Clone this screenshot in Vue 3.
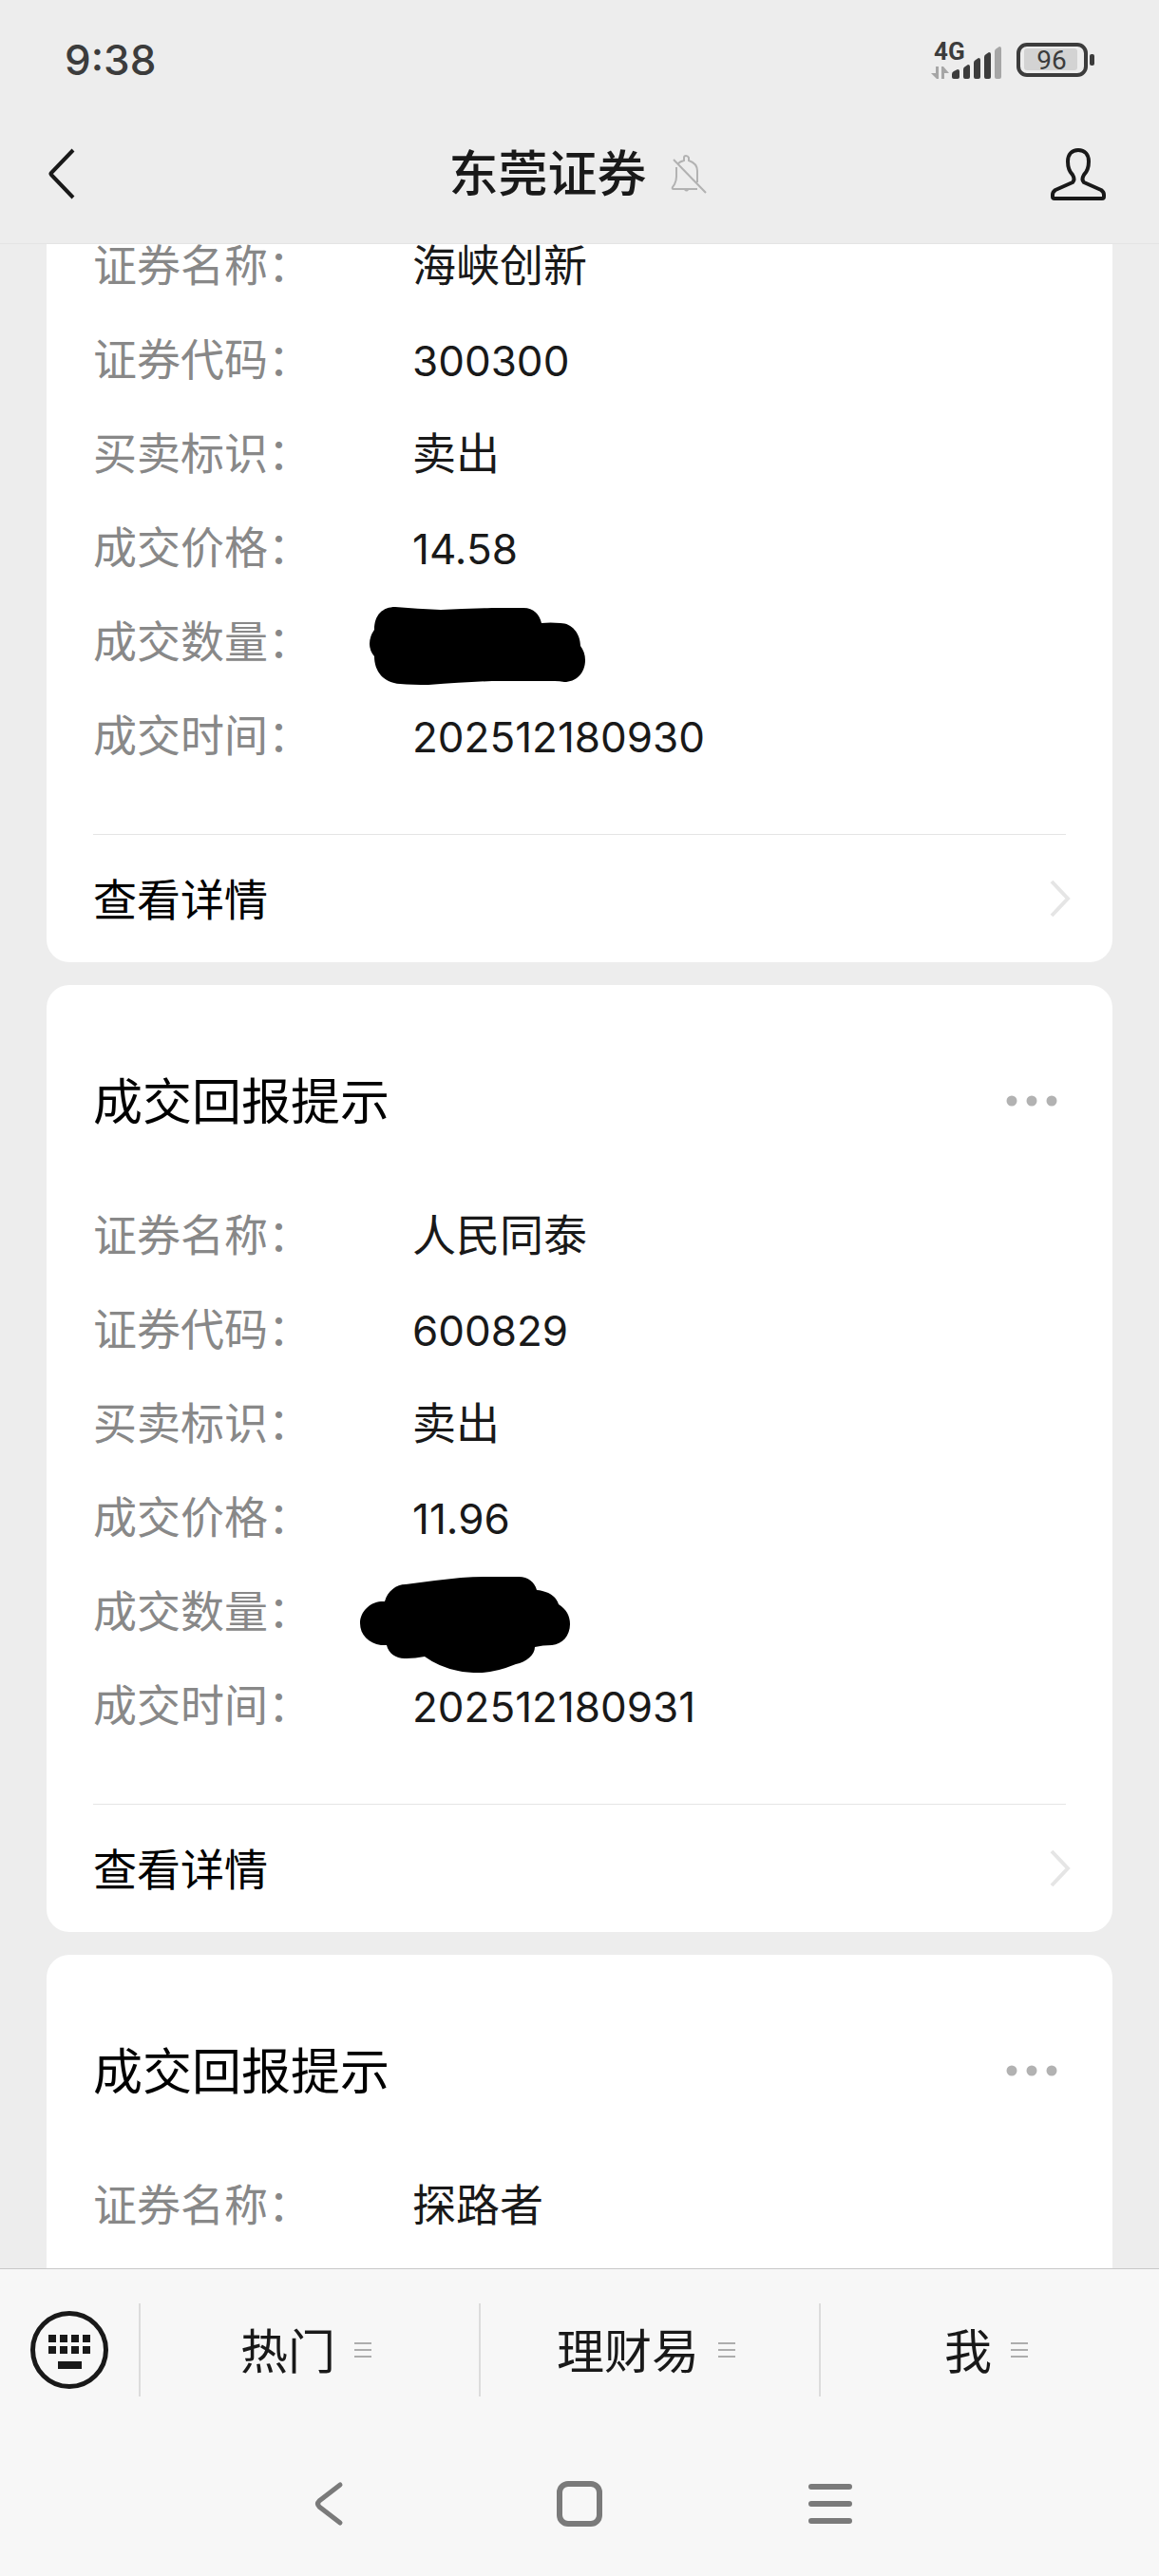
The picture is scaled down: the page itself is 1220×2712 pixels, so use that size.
<script setup>
// Outlines of the hand-drawn marks that hide the traded quantity
const marks = {
  wide: {
    width: 228,
    height: 83,
    shift: -45,
    path: 'M27 0Q50 2 75 3Q100 2 129 1H162C173 1 179 8 181 17Q190 16 201 17C213 17 222 28 222 41C225 45 227 50 227 56C227 70 217 79 205 79Q200 78 195 78H129Q100 79 62 82Q45 82 32 81C15 80 5 68 5 52Q0 46 0 39Q0 31 5 24C5 8 14 0 27 0Z',
  },
  round: {
    width: 222,
    height: 102,
    shift: -55,
    path: 'M22 26H26C29 15 38 8 48 8Q76 4 106 1Q124 0 141 0H167C177 0 184 6 186 14Q189 14 192 15C201 17 207 22 209 29C217 34 221 41 221 50C221 62 213 71 202 72Q192 72 184 74C184 82 175 90 164 92Q142 101 126 101Q112 101 103 99Q83 95 68 84Q58 86 49 86C39 87 30 81 28 72H22C9 70 0 61 0 49C0 37 10 27 22 26Z',
  },
}

const cards = [
  {
    clipped: true,
    rows: [
      { label: '证券名称', value: '海峡创新' },
      { label: '证券代码', value: '300300', numeric: true },
      { label: '买卖标识', value: '卖出' },
      { label: '成交价格', value: '14.58', numeric: true },
      { label: '成交数量', mark: marks.wide },
      { label: '成交时间', value: '202512180930', numeric: true },
    ],
    link: true,
  },
  {
    title: '成交回报提示',
    rows: [
      { label: '证券名称', value: '人民同泰' },
      { label: '证券代码', value: '600829', numeric: true },
      { label: '买卖标识', value: '卖出' },
      { label: '成交价格', value: '11.96', numeric: true },
      { label: '成交数量', mark: marks.round },
      { label: '成交时间', value: '202512180931', numeric: true },
    ],
    link: true,
  },
  {
    title: '成交回报提示',
    rows: [{ label: '证券名称', value: '探路者' }],
  },
]

const menus = ['热门', '理财易', '我']
</script>

<template>
  <div class="screen">
    <div class="status">
      <time class="clock">9:38</time>
      <div class="status-icons">
        <svg width="76" height="42" viewBox="0 0 76 42" aria-hidden="true">
          <text x="3" y="21" class="network">4G</text>
          <path fill="#a6a6a6" d="M5 28h3v13H6L0 35h5zM11 41V28h2l6 7h-5v6z" />
          <g fill="#3c3c3c">
            <path d="M22 36q0-2 2-3l4-2q2 0 2 2v6q0 2-2 2h-4q-2 0-2-2z" />
            <path d="M34 31q0-2 2-3l3-2q2 0 2 2v11q0 2-2 2h-3q-2 0-2-2z" />
            <path d="M45 24q0-2 2-3l3-2q2 0 2 2v18q0 2-2 2h-3q-2 0-2-2z" />
            <path d="M56 18q0-2 2-3l3-2q2 0 2 2v24q0 2-2 2h-3q-2 0-2-2z" />
          </g>
          <path fill="#a6a6a6" d="M67 12q0-2 2-3l3-2q2 0 2 2v30q0 2-2 2h-3q-2 0-2-2z" />
        </svg>
        <svg width="82" height="38" viewBox="0 0 82 38" aria-hidden="true">
          <rect x="8" y="7" width="56" height="23" rx="3" fill="#d3d3d3" />
          <rect x="2" y="3" width="71" height="32" rx="9" fill="none" stroke="#3c3c3c" stroke-width="4" />
          <rect x="77" y="13" width="5" height="12" rx="2" fill="#3c3c3c" />
          <text x="37" y="29" class="charge">96</text>
        </svg>
      </div>
    </div>

    <header class="nav">
      <button class="icon-button back" type="button" aria-label="返回">
        <svg width="30" height="54" viewBox="0 0 30 54">
          <path d="M27 2L4 26q-1 1 0 2L27 52" fill="none" stroke="#191919" stroke-width="4" />
        </svg>
      </button>
      <div class="nav-title">
        <h1>东莞证券</h1>
        <svg width="38" height="42" viewBox="0 0 38 42" fill="none" stroke="#b2b2b2" stroke-width="2" aria-hidden="true">
          <path d="M3 6L37 41M6 14V24Q6 28 4 32L2 35Q1 37 3 37H28M8 10Q10 8 14 7V4Q14 2 16 2T19 4V7Q28 10 28 18V30" />
          <path d="M14 38h5q-2 3-5 0z" fill="#b2b2b2" stroke="none" />
        </svg>
      </div>
      <button class="icon-button profile" type="button" aria-label="账号资料">
        <svg width="62" height="58" viewBox="0 0 62 58">
          <path
            d="M31 4C24 4 20 9 20 16C20 22 22 27 25 30Q28 35 25 38L7 46Q4 48 4 51V53Q4 55 6 55H56Q58 55 58 53V51Q58 48 55 46L37 38Q34 35 37 30C40 27 42 22 42 16C42 9 38 4 31 4Z"
            fill="none" stroke="#191919" stroke-width="4" stroke-linejoin="round"
          />
        </svg>
      </button>
    </header>

    <main class="messages">
      <article v-for="(card, i) in cards" :key="i" class="card" :class="{ clipped: card.clipped, open: !card.link }">
        <div v-if="card.title" class="card-head">
          <h2>{{ card.title }}</h2>
          <button class="icon-button" type="button" aria-label="更多">
            <svg width="54" height="12" viewBox="0 0 54 12" fill="#b2b2b2">
              <circle cx="6" cy="6" r="5.500" />
              <circle cx="27" cy="6" r="5.500" />
              <circle cx="48" cy="6" r="5.500" />
            </svg>
          </button>
        </div>
        <dl class="rows">
          <div v-for="row in card.rows" :key="row.label" class="row">
            <dt>{{ row.label }}：</dt>
            <dd :class="{ numeric: row.numeric }">
              <svg
                v-if="row.mark" class="mark" :width="row.mark.width" :height="row.mark.height"
                :style="{ left: row.mark.shift + 'px' }" aria-hidden="true"
              >
                <path :d="row.mark.path" />
              </svg>
              <template v-else>{{ row.value }}</template>
            </dd>
          </div>
        </dl>
        <a v-if="card.link" class="details" href="#">
          <span>查看详情</span>
          <svg width="24" height="42" viewBox="0 0 24 42" aria-hidden="true">
            <path d="M3 3L20 21L3 39" fill="none" stroke="#e5e5e5" stroke-width="4" />
          </svg>
        </a>
      </article>
    </main>

    <footer>
      <div class="menu-bar">
        <button class="icon-button keyboard" type="button" aria-label="键盘">
          <svg width="82" height="82" viewBox="0 0 82 82" fill="#191919">
            <circle cx="41" cy="41" r="38.500" fill="none" stroke="#191919" stroke-width="5" />
            <path d="M19 25h8v8h-8zM31 25h8v8h-8zM43 25h8v8h-8zM55 25h8v8h-8zM19 37h8v8h-8zM31 37h8v8h-8zM43 37h8v8h-8zM55 37h8v8h-8zM29 53h25v8H29z" />
          </svg>
        </button>
        <button v-for="name in menus" :key="name" class="menu" type="button">
          <span>{{ name }}</span>
          <svg width="18" height="18" viewBox="0 0 18 18" aria-hidden="true">
            <path d="M0 2H18M0 9H18M0 16H18" stroke="#adadad" stroke-width="2" />
          </svg>
        </button>
      </div>
      <nav class="system" aria-label="系统导航">
        <button class="icon-button" type="button" aria-label="后退">
          <svg width="32" height="48" viewBox="0 0 32 48">
            <path d="M28 4L6 21Q3 24 6 27L28 44" fill="none" stroke="#7a7a7a" stroke-width="5" stroke-linecap="round" />
          </svg>
        </button>
        <button class="icon-button" type="button" aria-label="主屏幕">
          <svg width="48" height="48" viewBox="0 0 48 48">
            <rect x="3" y="3" width="42" height="42" rx="9" fill="none" stroke="#7a7a7a" stroke-width="6" />
          </svg>
        </button>
        <button class="icon-button" type="button" aria-label="最近任务">
          <svg width="46" height="48" viewBox="0 0 46 48">
            <path d="M3 6H43M3 24H43M3 42H43" stroke="#7a7a7a" stroke-width="6" stroke-linecap="round" />
          </svg>
        </button>
      </nav>
    </footer>
  </div>
</template>

<style>
body {
  margin: 0;
  background: #ededed;
}
</style>

<style scoped>
.screen {
  display: flex;
  flex-direction: column;
  min-height: 100vh;
  box-sizing: border-box;
  background: #ededed;
  color: #191919;
  font-family: "Noto Sans CJK SC", sans-serif;
  font-size: 46px;
}

svg {
  display: block;
  overflow: visible;
}

h1,
h2,
dl,
dd {
  margin: 0;
}

button {
  margin: 0;
  padding: 0;
  border: 0;
  background: none;
  color: inherit;
  font: inherit;
}

.icon-button {
  display: flex;
  align-items: center;
  justify-content: center;
}

/* Lifts the ideographs to the optical middle of their line */
h1,
h2,
.menu span,
.details span {
  padding-bottom: 5px;
}

.status {
  display: flex;
  align-items: center;
  justify-content: space-between;
  height: 92px;
  padding: 17px 68px 0;
  color: #3c3c3c;
}

.clock {
  font-family: Inter, sans-serif;
  font-size: 44px;
  font-weight: 500;
}

.status-icons {
  display: flex;
  align-items: center;
  gap: 14px;
}

.network {
  fill: #3c3c3c;
  font-family: Roboto, sans-serif;
  font-size: 26px;
  font-weight: 700;
}

.charge {
  fill: #3c3c3c;
  font-family: Roboto, sans-serif;
  font-size: 28px;
  font-weight: 400;
  text-anchor: middle;
}

.nav {
  display: grid;
  grid-template-columns: 1fr auto 1fr;
  align-items: center;
  height: 147px;
  padding: 0 54px 0 50px;
  border-bottom: 1px solid #e4e4e4;
}

.nav-title {
  display: flex;
  align-items: center;
  gap: 25px;
}

h1 {
  font-size: 52px;
  line-height: 76px;
  font-weight: 500;
}

.profile {
  justify-self: end;
}

.back {
  justify-self: start;
}

.messages {
  display: flex;
  flex: 1;
  flex-direction: column;
  gap: 24px;
  padding: 0 49px;
  overflow: hidden;
}

.card {
  border-radius: 24px;
  background: #fff;
}

/* The first message is scrolled partly under the title bar */
.clipped {
  margin-top: -28px;
}

.open {
  flex: 1;
  border-radius: 24px 24px 0 0;
}

.card-head {
  display: flex;
  align-items: center;
  justify-content: space-between;
  height: 96px;
  padding: 74px 58px 43px 49px;
  color: #000;
}

h2 {
  font-size: 52px;
  line-height: 76px;
  font-weight: 400;
}

.rows {
  padding: 0 49px;
}

.row {
  display: flex;
  height: 99px;
  line-height: 94px;
}

dt {
  width: 336px;
  color: #888;
}

dd {
  position: relative;
  flex: 1;
}

.numeric {
  font-family: Inter, sans-serif;
  font-size: 44px;
  line-height: 104px;
}

.mark {
  position: absolute;
  top: 14px;
}

.details {
  display: flex;
  align-items: center;
  justify-content: space-between;
  height: 134px;
  margin: 55px 49px 0;
  border-top: 1px solid #e5e5e5;
  color: #000;
  text-decoration: none;
}

.details svg {
  margin-right: -6px;
}

footer {
  border-top: 1px solid #c8c8c8;
  background: #f7f7f7;
}

.menu-bar {
  display: flex;
  align-items: center;
  height: 170px;
}

.keyboard {
  width: 146px;
}

.menu {
  display: flex;
  flex: 1;
  align-items: center;
  justify-content: center;
  gap: 20px;
  height: 98px;
  padding-right: 8px;
  border-left: 2px solid #dcdcdc;
  font-size: 50px;
}

.system {
  display: flex;
  justify-content: center;
  height: 153px;
}

.system .icon-button {
  width: 264px;
}
</style>
